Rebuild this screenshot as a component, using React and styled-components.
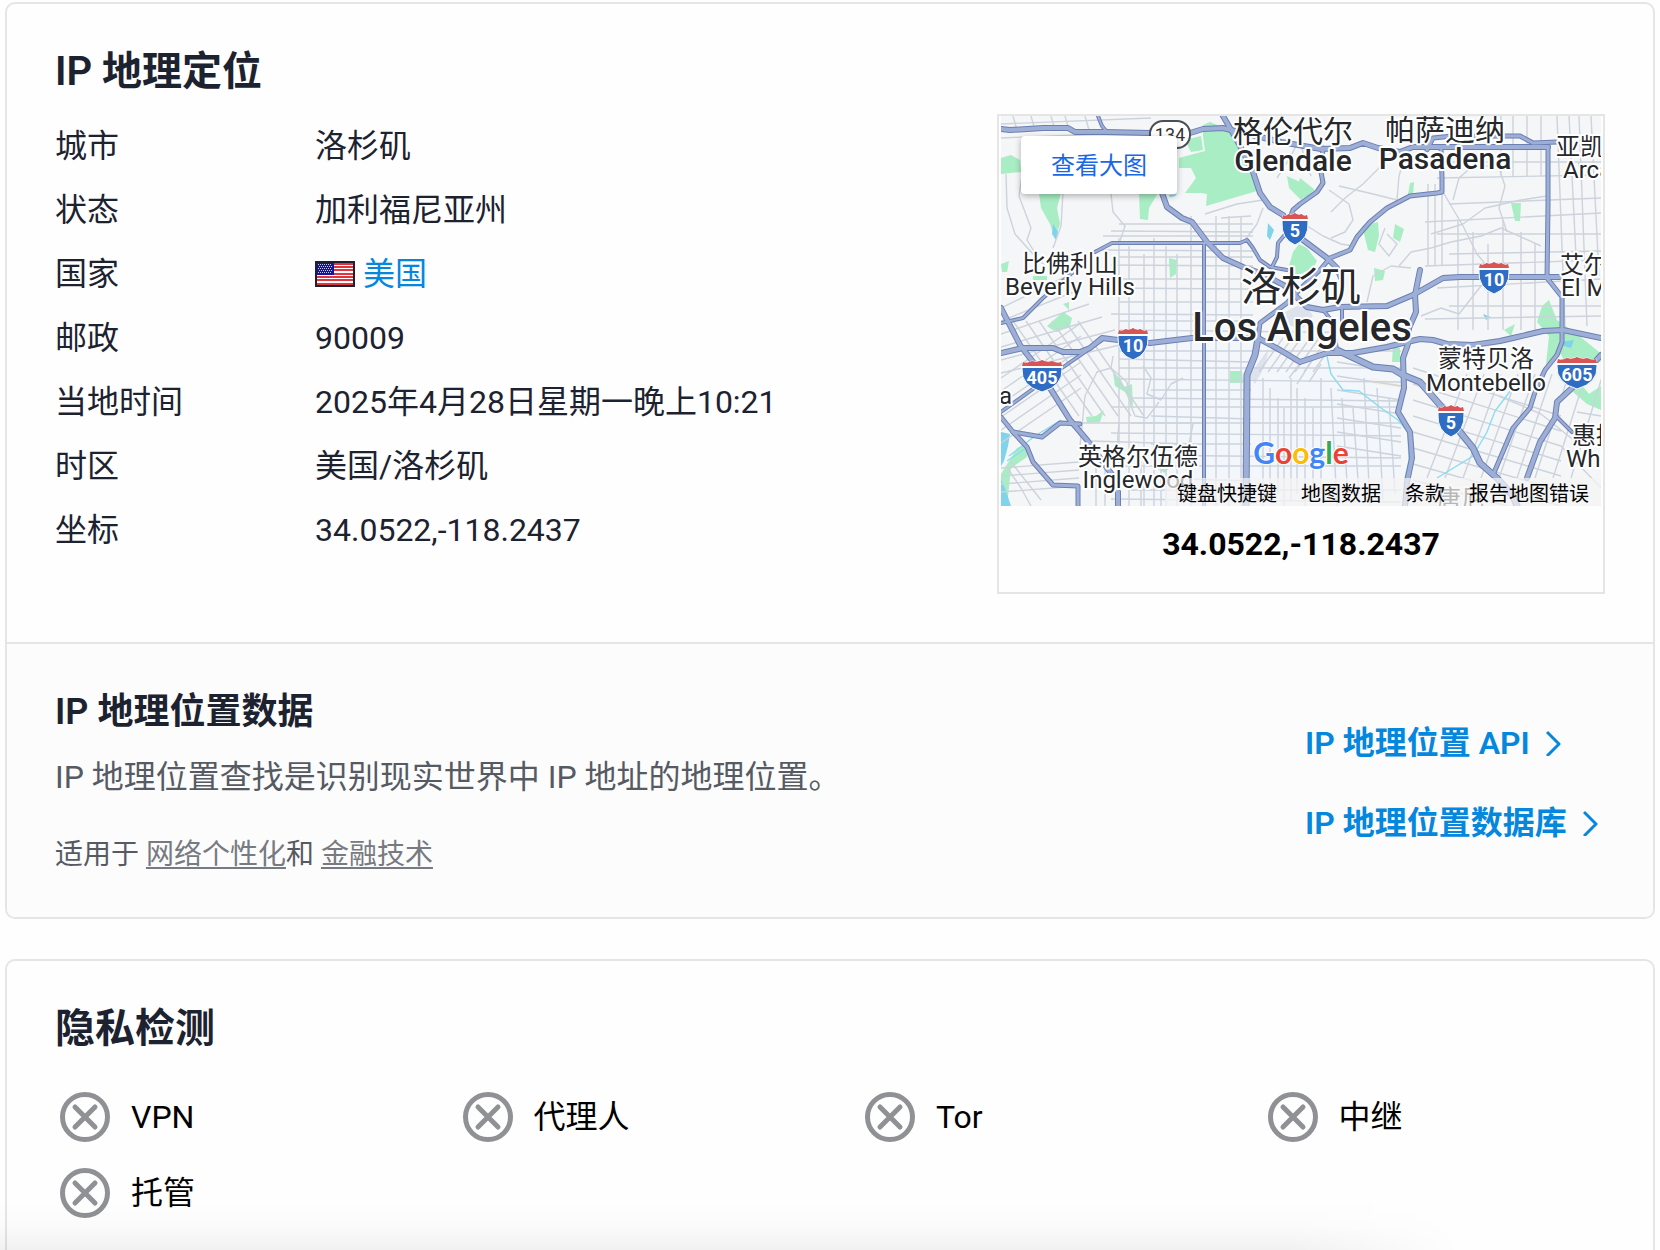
import React from "react";
import styled, { createGlobalStyle, css } from "styled-components";

const sans = `Roboto, "Noto Sans CJK SC", sans-serif`;
const ink = "#1d2230";
const line = "#e5e5e6";
const blue = "#0487dd";

const GlobalStyle = createGlobalStyle`
  * { box-sizing: border-box; }
  body {
    margin: 0;
    background: #fefefe;
    color: ${ink};
    font-family: ${sans};
    font-size: 32px;
  }
`;

const Page = styled.main`
  min-height: 100vh;
  padding: 2px 5px 0;
  display: flex;
  flex-direction: column;
  gap: 40px;
`;

const Card = styled.section`
  border: 2px solid ${line};
  border-radius: 10px;
  overflow: hidden;
  ${(p) =>
    p.$open &&
    css`
      flex: 1;
      border-bottom: 0;
      border-radius: 10px 10px 0 0;
    `}
`;

const CardBody = styled.div`
  padding: 40px 48px 48px;
`;

const Title = styled.h2`
  margin: 0;
  font-size: 40px;
  line-height: 56px;
  font-weight: 600;
`;

const GeoLayout = styled.div`
  margin-top: 14px;
  display: grid;
  grid-template-columns: minmax(0, 1fr) 608px;
  gap: 32px;
  align-items: start;
`;

const GeoTable = styled.table`
  width: 100%;
  border-collapse: collapse;
  table-layout: fixed;
  line-height: 48px;
`;

const HeadCell = styled.th`
  width: 260px;
  padding: 8px 0;
  text-align: left;
  font-weight: 400;
`;

const Cell = styled.td`
  padding: 8px 0;
`;

const Country = styled.span`
  display: flex;
  align-items: center;
  gap: 8px;
`;

const CountryLink = styled.a`
  color: ${blue};
  text-decoration: none;
`;

const MapBox = styled.figure`
  margin: 0;
  border: 2px solid ${line};
  padding: 0 2px;
`;

const MapFrame = styled.div`
  position: relative;
  height: 390px;
  overflow: hidden;
`;

const MapDrawing = styled.svg`
  display: block;
  width: 100%;
  height: 100%;
  font-family: ${sans};
`;

const LargerMap = styled.a`
  position: absolute;
  top: 20px;
  left: 20px;
  padding: 2px 30px 0;
  border-radius: 4px;
  background: #fff;
  box-shadow: 0 2px 6px rgba(0, 0, 0, 0.3);
  color: #1a67e6;
  font-size: 24px;
  line-height: 56px;
  text-decoration: none;
`;

const Attribution = styled.div`
  position: absolute;
  right: 0;
  bottom: 0;
  display: flex;
  background: rgba(245, 245, 245, 0.7);
`;

const attributionItem = css`
  padding: 4px 12px 0;
  border: 0;
  background: none;
  color: #000;
  font-family: inherit;
  font-size: 20px;
  line-height: 24px;
  text-decoration: none;
`;

const AttributionButton = styled.button`
  ${attributionItem}
`;

const AttributionLink = styled.a`
  ${attributionItem}
`;

const Caption = styled.figcaption`
  padding: 14px 0 24px;
  color: #000;
  font-weight: 700;
  line-height: 48px;
  text-align: center;
`;

const Promo = styled.div`
  display: grid;
  grid-template-columns: minmax(0, 1fr) 300px;
  gap: 32px;
  align-items: center;
  padding: 40px 48px 41px;
  border-top: 2px solid ${line};
  background: #fcfcfc;
`;

const PromoTitle = styled.h3`
  margin: 0;
  font-size: 36px;
  line-height: 56px;
  font-weight: 600;
`;

const PromoText = styled.p`
  margin: 10px 0 0;
  color: #565a63;
  line-height: 54px;
`;

const UsedFor = styled.p`
  margin: 30px 0 0;
  color: #565a63;
  font-size: 28px;
  line-height: 42px;
`;

const SoftLink = styled.a`
  color: #777a81;
  text-decoration: underline;
  text-decoration-thickness: 2px;
  text-underline-offset: 3px;
`;

const PromoLinks = styled.nav`
  padding-top: 5px;
  display: flex;
  flex-direction: column;
  align-items: flex-start;
  gap: 32px;
`;

const PromoLink = styled.a`
  display: flex;
  align-items: center;
  gap: 16px;
  color: ${blue};
  font-weight: 600;
  line-height: 48px;
  white-space: nowrap;
  text-decoration: none;
`;

const PrivacyList = styled.ul`
  margin: 30px 0 0;
  padding: 0;
  list-style: none;
  display: grid;
  grid-template-columns: repeat(4, minmax(0, 1fr));
  gap: 16px 60px;
`;

const PrivacyItem = styled.li`
  display: flex;
  align-items: center;
  gap: 16px;
  color: #000;
  line-height: 60px;
`;

const BottomShade = styled.div`
  position: fixed;
  left: 0;
  right: 12%;
  bottom: 0;
  height: 50px;
  pointer-events: none;
  background: linear-gradient(to bottom, rgba(0, 0, 0, 0), rgba(0, 0, 0, 0.012) 50%, rgba(0, 0, 0, 0.05));
  mask-image: linear-gradient(to right, #000 88%, transparent);
`;

function Flag() {
  return (
    <svg width="40" height="26" viewBox="0 0 40 26" role="img" aria-label="美国国旗">
      <rect width="40" height="26" fill="#1b2130" />
      <rect x="2" y="2" width="36" height="22" fill="#fff" />
      {[2, 5, 8, 12, 15, 18, 22].map((y) => (
        <rect key={y} x="2" y={y} width="36" height="2" fill="#e0353f" />
      ))}
      <rect x="2" y="2" width="17" height="12" fill="#1414a4" />
      {[4, 6, 8, 10, 12].map((y, r) =>
        [0, 1, 2, 3, 4, 5, 6].map((i) => (
          <rect key={`${y}-${i}`} x={3 + i * 2 + (r % 2)} y={y - 1} width="1" height="1" fill="#c9c9f4" />
        ))
      )}
    </svg>
  );
}

function Chevron() {
  return (
    <svg width="16" height="26" viewBox="0 0 16 26" fill="none" stroke="currentColor" strokeWidth="3" aria-hidden="true">
      <path d="M1 2 L13 14 L1 26" strokeLinejoin="round" />
    </svg>
  );
}

function CrossIcon() {
  return (
    <svg width="60" height="60" viewBox="0 0 60 60" fill="none" stroke="#8f9194" strokeWidth="5" aria-hidden="true">
      <circle cx="30" cy="30" r="22.5" />
      <path d="M20 20 L40 40 M40 20 L20 40" strokeLinecap="round" />
    </svg>
  );
}

const greens = [
  "M202 9 L209 6 L234 16 L252 57 L256 75 L205 90 L206 78 L200 77 L184 77 L195 62 L190 52 L178 52 L178 42 L204 35 L202 20Z",
  "M184 24 L200 20 L202 34 L190 36Z",
  "M0 42 L10 39 L19 44 L20 56 L0 58Z",
  "M38 77 L60 77 L56 92 L59 108 L54 123 L49 108 L40 92Z",
  "M138 77 L157 77 L148 92 L147 104 L139 103Z",
  "M168 142 L176 144 L175 158 L169 162Z",
  "M0 148 L8 145 L6 156 L1 156Z",
  "M32 160 L46 160 L46 164 L32 164Z",
  "M286 60 L299 66 L311 74 L300 84 L288 72Z",
  "M299 62 L314 74 L304 82 L296 74Z",
  "M298 128 L306 132 L316 145 L312 152 L296 160 L288 150 L292 136Z",
  "M361 110 L377 106 L378 120 L374 136 L367 134Z",
  "M394 108 L403 113 L399 126 L392 122Z",
  "M373 152 L384 155 L382 164 L374 165Z",
  "M409 67 L413 66 L412 80 L407 78Z",
  "M510 87 L520 87 L519 105 L514 105Z",
  "M541 190 L548 184 L556 204 L576 218 L598 236 L600 245 L570 262 L560 238 L545 248 L548 220 L536 206Z",
  "M503 214 L514 208 L510 220Z",
  "M575 262 L588 278 L600 270 L600 294 L586 288 L572 276Z",
  "M577 46 L594 50 L588 53 L577 51Z",
  "M392 230 L399 232 L399 246 L391 246Z",
  "M229 255 L241 255 L242 267 L229 267Z",
  "M112 257 L120 264 L123 271 L131 268 L132 292 L124 276 L114 270Z",
  "M85 301 L95 300 L103 294 L99 306 L86 307Z",
  "M46 210 L62 196 L71 202 L69 210 L56 216 L50 213Z",
  "M62 188 L68 186 L68 194Z",
  "M0 358 L16 332 L26 328 L26 341 L10 352 L6 390 L0 390Z",
  "M155 352 L168 352 L164 357Z",
];

const waters = [
  "M0 316 L9 318 L7 330 L3 345 L0 350Z",
  "M0 364 L4 372 L10 390 L0 390Z",
  "M52 108 L57 116 L55 124 L51 118Z",
  "M267 107 L273 114 L269 124 L266 120Z",
  "M168 79 L176 78 L174 80 L169 81Z",
  "M482 198 L490 201 L485 204Z",
  "M560 226 L573 224 L570 232 L563 230Z",
];

const creeks = [
  "M325 236 L330 258 L342 274 L358 275 L380 292 L397 304 L407 316 L408 345 L404 362",
  "M436 362 L472 340 L486 316 L494 295 L510 274",
  "M8 340 L34 320 L60 304 M6 345 L28 330",
  "M306 128 L314 131",
];

const freeways = [
  { w: 6, d: "M0 13 L9 14 L42 12 L67 12 L74 16 L104 16 L149 17 L189 17 L202 13 L222 12 L234 15 L280 26 L320 33 L349 32 L362 27 L377 32 L399 36 L412 31 L432 31 L547 31" },
  { w: 5, d: "M426 34 L432 22 L452 20 L519 20 L532 27 L556 26" },
  { w: 4, d: "M97 0 L101 10 L106 16" },
  { w: 6, d: "M222 0 L229 12 L238 28 L252 56 L259 77 L269 91 L282 99 L294 116 L302 124 L326 142 L336 152 L340 162" },
  { w: 5, d: "M322 32 L320 56 L322 67 L316 76 L299 88 L292 94 L289 102" },
  { w: 6, d: "M161 77 L166 91 L181 102 L191 106 L206 126 L222 142 L242 151 L262 158 L284 170 L306 191 L322 194 L339 191 L386 190 L412 179 L442 162 L459 161 L559 161" },
  { w: 4, d: "M94 136 L111 127 L239 127 L246 124 L252 132 L259 144 L269 151 L286 154" },
  { w: 4, d: "M271 151 L276 141 L277 127 L286 116" },
  { w: 4, d: "M203 128 L203 390" },
  { w: 5, d: "M440 32 L441 62 L441 76 L436 77 L409 80 L386 92 L369 106 L362 114 L356 121 L349 134 L329 142 L319 154 L300 172 L286 187 L259 207 L257 222" },
  { w: 7, d: "M257 222 L254 239 L246 259 L245 390" },
  { w: 6, d: "M0 237 L22 232 L52 232 L62 236 L79 236 L89 232 L101 222 L117 224 L149 227 L191 222 L257 222 L279 234 L299 246 L326 237 L352 237 L386 231 L406 226 L419 223 L432 224 L446 228 L472 229 L499 225 L512 222 L542 215 L562 214 L600 222" },
  { w: 4, d: "M0 296 L61 252 L101 224" },
  { w: 6, d: "M0 192 L19 229 L32 246 L49 272 L69 304 L86 324 L112 360 L117 376 L117 390" },
  { w: 4, d: "M0 207 L9 205 L22 202 L42 182 L71 157" },
  { w: 5, d: "M0 301 L12 316 L26 331 L32 346 L52 369 L77 370 L77 390" },
  { w: 5, d: "M12 316 L41 321 L59 307 L79 308" },
  { w: 7, d: "M336 234 L372 251 L392 253 L402 259 L419 266 L439 289 L446 296 L459 316 L472 332 L479 347 L496 362 L512 380 L516 390" },
  { w: 6, d: "M419 154 L414 179 L415 196 L408 212 L407 228 L402 242 L403 272 L397 296 L409 316 L411 342 L406 366 L404 390" },
  { w: 5, d: "M547 31 L547 89 L546 162 L561 181 L561 226 L556 239 L544 254 L534 276 L529 292 L512 312 L492 359" },
  { w: 6, d: "M600 239 L571 272 L556 286 L554 302 L539 326 L526 362" },
  { w: 4, d: "M556 301 L571 316" },
  { w: 4, d: "M322 194 L332 206 L336 234 M341 192 L341 212" },
];

/* Surface streets: [x1, y1, x2, y2] */
const grid = [];
[118, 128, 143, 153, 165, 176, 190, 215, 228, 240].forEach((x, i) => grid.push([x, i < 6 ? 122 + (i % 3) * 8 : 100, x, 390]));
[108, 115, 120, 134, 141, 149, 163, 172, 186, 198].forEach((y, i) => grid.push([118 - (i % 4) * 8, y, 252, y + (i % 2)]));
[205, 214, 235, 243, 252, 263, 274, 282, 291, 300, 307, 317, 328, 339, 350, 362, 374, 383].forEach((y, i) =>
  grid.push([i < 6 ? 118 : 150 - (i % 3) * 20, y, i % 3 === 0 ? 250 : 400, y + (i % 2) * 3])
);
[262, 269, 277, 283, 290, 296, 304, 312, 320, 330, 341, 352, 363, 376, 388].forEach((x, i) =>
  grid.push([x, 262 + (i % 4) * 10, x + (i > 8 ? 6 : 0), 390 - (i % 3) * 6])
);
[12, 25, 38, 51, 64, 77].forEach((n) => {
  grid.push([0, 180 + n, n + 50, 150 + n]);
  grid.push([n, 205, n + 66, 300]);
  grid.push([0, 250 + n, 80, 195 + n]);
});
[12, 30, 50, 64, 84].forEach((x) => grid.push([x, 0, x + 4, 14]));
[8, 22].forEach((y) => grid.push([0, y, 150, y - 6]));
[457, 472, 487, 502, 520, 534].forEach((x, i) => grid.push([x, 104 + (i % 3) * 12, x, 214]));
[427, 434, 441].forEach((x) => grid.push([x, 68, x, 150]));
[46, 62, 88, 106, 118, 138, 150, 172, 190, 203].forEach((y, i) => grid.push([424 + (i % 3) * 12, y, 600, y - (i % 4) * 3]));
[556, 568, 578, 590].forEach((x, i) => grid.push([x, 0, x + 8, i % 2 ? 160 : 210]));
[500, 512, 526, 540].forEach((x) => grid.push([x, 0, x, 60]));
[0, 1, 2, 3, 4, 5, 6, 7, 8].forEach((i) => {
  grid.push([412, 252 + i * 16, 560, 300 + i * 15]);
  grid.push([426 + i * 18, 362, 466 + i * 17, 258]);
});
[0, 1, 2, 3, 4, 5, 6].forEach((i) => {
  grid.push([258 + i * 9, 256, 282 + i * 9, 222]);
  grid.push([336, 246 + i * 14, 400, 256 + i * 14]);
});
[372, 380, 388, 396].forEach((y) => grid.push([0, y - 20, 78, y - 26]));
[95, 104, 140, 160].forEach((x) => grid.push([x, 345, x, 390]));

const streets = [
  "M5 58 L6 92 L14 118 L32 138 L44 150",
  "M22 52 L18 80 L30 112 L26 124 L36 140",
  "M62 76 L60 110 L52 132",
  "M110 78 L112 96 L124 110 L118 128",
  "M204 98 L236 88 L262 84 M220 102 L250 100",
  "M262 92 L256 108 L244 124",
  "M276 62 L290 40 L296 28 M300 30 L310 60",
  "M328 74 L348 88 L352 104 L344 116 L330 122",
  "M338 70 L372 78 L396 84 L398 60 L404 40",
  "M384 112 L378 128 L388 140 L396 128 L386 118",
  "M398 150 L410 136 L430 132 L450 126 L480 120 L500 112 L540 130",
  "M330 96 L344 82 L362 68 L380 50",
  "M300 106 L322 120 L340 128 L352 130",
  "M442 76 L462 110 L476 138 L496 162",
  "M452 84 L458 62 L474 48 L498 52 L504 70 L498 92 L506 116",
  "M430 118 L462 108 L484 92 L520 84 L546 80",
  "M366 186 L372 160 L390 150 L410 152",
  "M420 200 L440 192 L458 198 L480 170",
  "M79 330 L84 280 L96 256 L110 252 L112 240",
  "M110 252 L126 266 L130 290 L134 300 L146 302 L158 286",
  "M142 250 L150 262 L146 278 L160 284 L170 268 L182 262",
  "M80 307 L200 307 M90 325 L188 328 L192 308",
  "M118 306 L116 332 L120 345",
  "M5 350 L20 372 L30 390 M10 346 L40 384",
  "M300 246 L288 262 M310 246 L296 268 M320 248 L308 266",
  "M358 214 L352 226 M372 206 L390 214 L400 208",
  "M498 280 L540 298 L580 330 L600 340",
  "M576 296 L600 300 M560 330 L600 372",
];

const interstates = [
  { n: "5", x: 281, y: 97, w: 26 },
  { n: "10", x: 478, y: 146, w: 30 },
  { n: "10", x: 117, y: 212, w: 30 },
  { n: "405", x: 21, y: 244, w: 40 },
  { n: "605", x: 556, y: 241, w: 40 },
  { n: "5", x: 437, y: 289, w: 26 },
];

const places = [
  { t: "格伦代尔", x: 292, y: 26, s: 30 },
  { t: "Glendale", x: 292, y: 55, s: 30, b: 500 },
  { t: "帕萨迪纳", x: 444, y: 24, s: 30 },
  { t: "Pasadena", x: 444, y: 53, s: 30, b: 500 },
  { t: "亚凯迪亚", x: 555, y: 39, s: 24, a: "start" },
  { t: "Arcadia", x: 562, y: 62, s: 24, a: "start" },
  { t: "艾尔蒙特", x: 559, y: 157, s: 24, a: "start" },
  { t: "El Monte", x: 560, y: 180, s: 24, a: "start" },
  { t: "惠提尔", x: 571, y: 328, s: 24, a: "start" },
  { t: "Whittier", x: 565, y: 351, s: 24, a: "start" },
  { t: "比佛利山", x: 69, y: 156, s: 24 },
  { t: "Beverly Hills", x: 69, y: 179, s: 24 },
  { t: "洛杉矶", x: 300, y: 185, s: 40 },
  { t: "Los Angeles", x: 301, y: 225, s: 40, b: 500 },
  { t: "蒙特贝洛", x: 485, y: 251, s: 24 },
  { t: "Montebello", x: 485, y: 275, s: 24 },
  { t: "英格尔伍德", x: 137, y: 349, s: 24 },
  { t: "Inglewood", x: 137, y: 372, s: 24 },
  { t: "Santa Monica", x: 11, y: 288, s: 24, a: "end" },
  { t: "唐尼", x: 460, y: 391, s: 24 },
];

function Interstate({ n, x, y, w }) {
  const m = w / 2;
  return (
    <g transform={`translate(${x} ${y})`}>
      <path
        d={`M1 2 Q4 4 ${m * 0.5} 1 Q${m * 0.75} 3 ${m} 0 Q${m * 1.25} 3 ${m * 1.5} 1 Q${w - 4} 4 ${w - 1} 2 L${w} 9 Q${w + 1} 26 ${m} 32 Q-1 26 0 9Z`}
        fill="#2f6cc4"
        stroke="#fff"
        strokeWidth="1"
      />
      <path
        d={`M1 2 Q4 4 ${m * 0.5} 1 Q${m * 0.75} 3 ${m} 0 Q${m * 1.25} 3 ${m * 1.5} 1 Q${w - 4} 4 ${w - 1} 2 L${w} 6 L0 6Z`}
        fill="#d95454"
      />
      <rect x="-1" y="6" width={w + 2} height="2" fill="#fff" />
      <text x={m} y="24" fontSize="18" fontWeight="700" fill="#fff" textAnchor="middle">
        {n}
      </text>
    </g>
  );
}

function CityMap() {
  return (
    <MapDrawing viewBox="0 0 600 390" preserveAspectRatio="xMidYMid slice" role="img" aria-label="洛杉矶地图">
      <rect width="600" height="390" fill="#f5f6f7" />
      <path d="M118 190 H250 L262 240 L400 250 V390 H140 V240Z" fill="#f3f6fa" />
      <path d="M370 262 L400 268 L400 272 L372 268Z" fill="#f7f0e4" />
      <g fill="#a8edc3">
        {greens.map((d) => (
          <path key={d} d={d} />
        ))}
      </g>
      <g fill="#7fd3ea">
        {waters.map((d) => (
          <path key={d} d={d} />
        ))}
      </g>
      <path d="M284 196 L304 186 L312 200 L300 214 L286 208Z M248 260 L268 232 L264 250 L254 268Z" fill="#dde2ec" />
      <g fill="none" stroke="#ccd3dc" strokeWidth="1.4">
        {grid.map(([a, b, c, d], i) => (
          <path key={i} d={`M${a} ${b} L${c} ${d}`} />
        ))}
        {streets.map((d) => (
          <path key={d} d={d} strokeLinejoin="round" />
        ))}
      </g>
      <g fill="none" stroke="#8cdcf0" strokeWidth="1.4">
        {creeks.map((d) => (
          <path key={d} d={d} />
        ))}
      </g>
      <g fill="none" strokeLinejoin="round" strokeLinecap="round">
        {freeways.map((f) => (
          <path key={f.d} d={f.d} stroke="#6c7fb2" strokeWidth={f.w} />
        ))}
        {freeways.map((f) => (
          <path key={f.d} d={f.d} stroke="#9dafd6" strokeWidth={f.w - 2} />
        ))}
      </g>
      <rect x="149" y="5" width="40" height="27" rx="13" fill="#fff" stroke="#4b4f54" strokeWidth="2" />
      <text x="169" y="25" fontSize="18" fill="#333" textAnchor="middle">
        134
      </text>
      {interstates.map((s) => (
        <Interstate key={`${s.x}-${s.y}`} {...s} />
      ))}
      <g fill="#25272b" stroke="#fff" strokeWidth="4" strokeLinejoin="round" paintOrder="stroke">
        {places.map((p) => (
          <text key={p.t} x={p.x} y={p.y} fontSize={p.s} fontWeight={p.b || 400} textAnchor={p.a || "middle"}>
            {p.t}
          </text>
        ))}
      </g>
      <text
        x="300"
        y="348"
        fontFamily="Lato, sans-serif"
        fontSize="30"
        fontWeight="700"
        textAnchor="middle"
        stroke="#fff"
        strokeWidth="2"
        paintOrder="stroke"
      >
        <tspan fill="#4285f4">G</tspan>
        <tspan fill="#ea4335">o</tspan>
        <tspan fill="#fbbc05">o</tspan>
        <tspan fill="#4285f4">g</tspan>
        <tspan fill="#34a853">l</tspan>
        <tspan fill="#ea4335">e</tspan>
      </text>
    </MapDrawing>
  );
}

const facts = [
  ["城市", "洛杉矶"],
  ["状态", "加利福尼亚州"],
  [
    "国家",
    <Country key="country">
      <Flag />
      <CountryLink href="#us">美国</CountryLink>
    </Country>,
  ],
  ["邮政", "90009"],
  ["当地时间", "2025年4月28日星期一晚上10:21"],
  ["时区", "美国/洛杉矶"],
  ["坐标", "34.0522,-118.2437"],
];

const privacy = ["VPN", "代理人", "Tor", "中继", "托管"];

export default function App() {
  return (
    <>
      <GlobalStyle />
      <Page lang="zh-CN">
        <Card>
          <CardBody>
            <Title>IP 地理定位</Title>
            <GeoLayout>
              <GeoTable>
                <tbody>
                  {facts.map(([name, value]) => (
                    <tr key={name}>
                      <HeadCell scope="row">{name}</HeadCell>
                      <Cell>{value}</Cell>
                    </tr>
                  ))}
                </tbody>
              </GeoTable>
              <MapBox>
                <MapFrame>
                  <CityMap />
                  <LargerMap href="#map">查看大图</LargerMap>
                  <Attribution>
                    <AttributionButton type="button">键盘快捷键</AttributionButton>
                    <AttributionButton type="button">地图数据</AttributionButton>
                    <AttributionLink href="#terms">条款</AttributionLink>
                    <AttributionLink href="#report">报告地图错误</AttributionLink>
                  </Attribution>
                </MapFrame>
                <Caption>34.0522,-118.2437</Caption>
              </MapBox>
            </GeoLayout>
          </CardBody>
          <Promo>
            <div>
              <PromoTitle>IP 地理位置数据</PromoTitle>
              <PromoText>IP 地理位置查找是识别现实世界中 IP 地址的地理位置。</PromoText>
              <UsedFor>
                适用于 <SoftLink href="#personalization">网络个性化</SoftLink>和{" "}
                <SoftLink href="#fintech">金融技术</SoftLink>
              </UsedFor>
            </div>
            <PromoLinks>
              <PromoLink href="#api">
                IP 地理位置 API
                <Chevron />
              </PromoLink>
              <PromoLink href="#database">
                IP 地理位置数据库
                <Chevron />
              </PromoLink>
            </PromoLinks>
          </Promo>
        </Card>
        <Card $open>
          <CardBody>
            <Title>隐私检测</Title>
            <PrivacyList>
              {privacy.map((name) => (
                <PrivacyItem key={name}>
                  <CrossIcon />
                  {name}
                </PrivacyItem>
              ))}
            </PrivacyList>
          </CardBody>
        </Card>
      </Page>
      <BottomShade />
    </>
  );
}
